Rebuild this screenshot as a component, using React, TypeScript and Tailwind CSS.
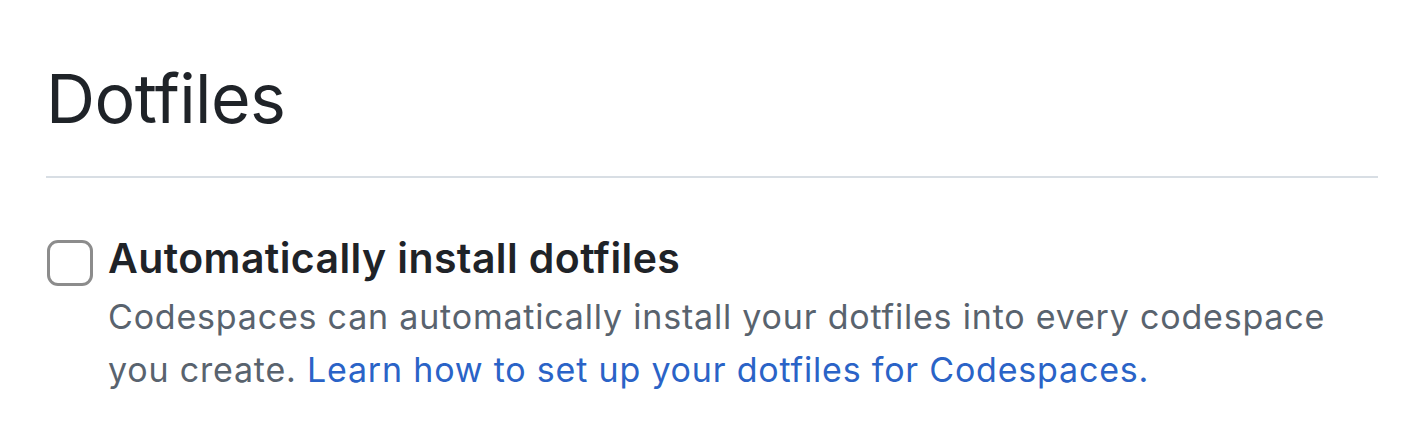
export default function App() {
  return (
    <div className="min-h-[422px] w-[1416px] bg-white px-[46px] pt-[58px] font-['Inter','Liberation_Sans',sans-serif]">
      <h2 className="text-[68px] leading-[80px] font-normal text-[#1f2328] tracking-[-0.6px]">Dotfiles</h2>
      <div className="mt-[38px] h-[2px] w-[1332px] bg-[#d8dee4]" />
      <div className="mt-[58px] flex gap-[15px]">
        <div className="mt-[4px] ml-[1px] h-[46px] w-[46px] shrink-0 rounded-[11px] border-[3px] border-[#8c8c8c] bg-white" />
        <div>
          <div className="text-[41px] leading-[44px] font-semibold text-[#1f2328] tracking-[0.4px]">Automatically install dotfiles</div>
          <p className="mt-[10px] text-[34px] leading-[53px] text-[#59636e] tracking-[0.8px]">
            Codespaces can automatically install your dotfiles into every codespace
            <br />
            you create. <a className="text-[#2a63c7]" href="#">Learn how to set up your dotfiles for Codespaces.</a>
          </p>
        </div>
      </div>
    </div>
  )
}
